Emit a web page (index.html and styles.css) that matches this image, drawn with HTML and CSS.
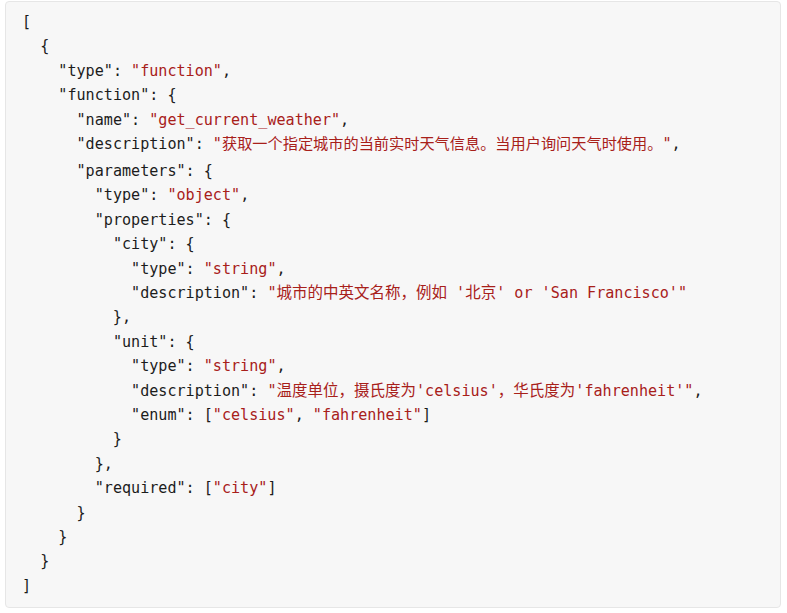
FILE: index.html
```html
<!DOCTYPE html>
<html lang="zh">
<head>
<meta charset="utf-8">
<title>Function schema</title>
<link rel="stylesheet" href="styles.css">
</head>
<body>
<div class="code-block"><pre class="code">[
  {
    <span class="k">"type"</span>: <span class="s">"function"</span>,
    <span class="k">"function"</span>: {
      <span class="k">"name"</span>: <span class="s">"get_current_weather"</span>,
      <span class="k">"description"</span>: <span class="s">"<span class="zh zh-top">获取一个指定城市的当前实时天气信息。当用户询问天气时使用。</span>"</span>,
</pre><pre class="code code-rest">      <span class="k">"parameters"</span>: {
        <span class="k">"type"</span>: <span class="s">"object"</span>,
        <span class="k">"properties"</span>: {
          <span class="k">"city"</span>: {
            <span class="k">"type"</span>: <span class="s">"string"</span>,
            <span class="k">"description"</span>: <span class="s">"<span class="zh">城市的中英文名称，例如</span> '<span class="zh">北京</span>' or 'San Francisco'"</span>
          },
          <span class="k">"unit"</span>: {
            <span class="k">"type"</span>: <span class="s">"string"</span>,
            <span class="k">"description"</span>: <span class="s">"<span class="zh">温度单位，摄氏度为</span>'celsius'<span class="zh">，华氏度为</span>'fahrenheit'"</span>,
            <span class="k">"enum"</span>: [<span class="s">"celsius"</span>, <span class="s">"fahrenheit"</span>]
          }
        },
        <span class="k">"required"</span>: [<span class="s">"city"</span>]
      }
    }
  }
]</pre></div>
</body>
</html>
```

FILE: styles.css
```css
html, body {
  margin: 0;
  padding: 0;
  background: #ffffff;
}

.code-block {
  margin: 1px 6px 0 5px;
  background: #f7f7f7;
  border: 1px solid #e6e6e6;
  border-radius: 4px;
  padding: 8px 16px 9px 16px;
}

.code {
  margin: 0;
  font-family: "DejaVu Sans Mono", "Noto Sans CJK SC", monospace;
  font-size: 15.1px;
  line-height: 24.4px;
  color: #1c1c1c;
  white-space: pre;
}

.code-rest {
  margin-top: 2.5px;
}

.k {
  color: #1c1c1c;
}

.s {
  color: #a8201a;
}

.zh {
  font-family: "Noto Sans CJK SC", sans-serif;
  font-size: 15.5px;
  line-height: 1;
}

.zh-top {
  font-size: 15.2px;
}
```
